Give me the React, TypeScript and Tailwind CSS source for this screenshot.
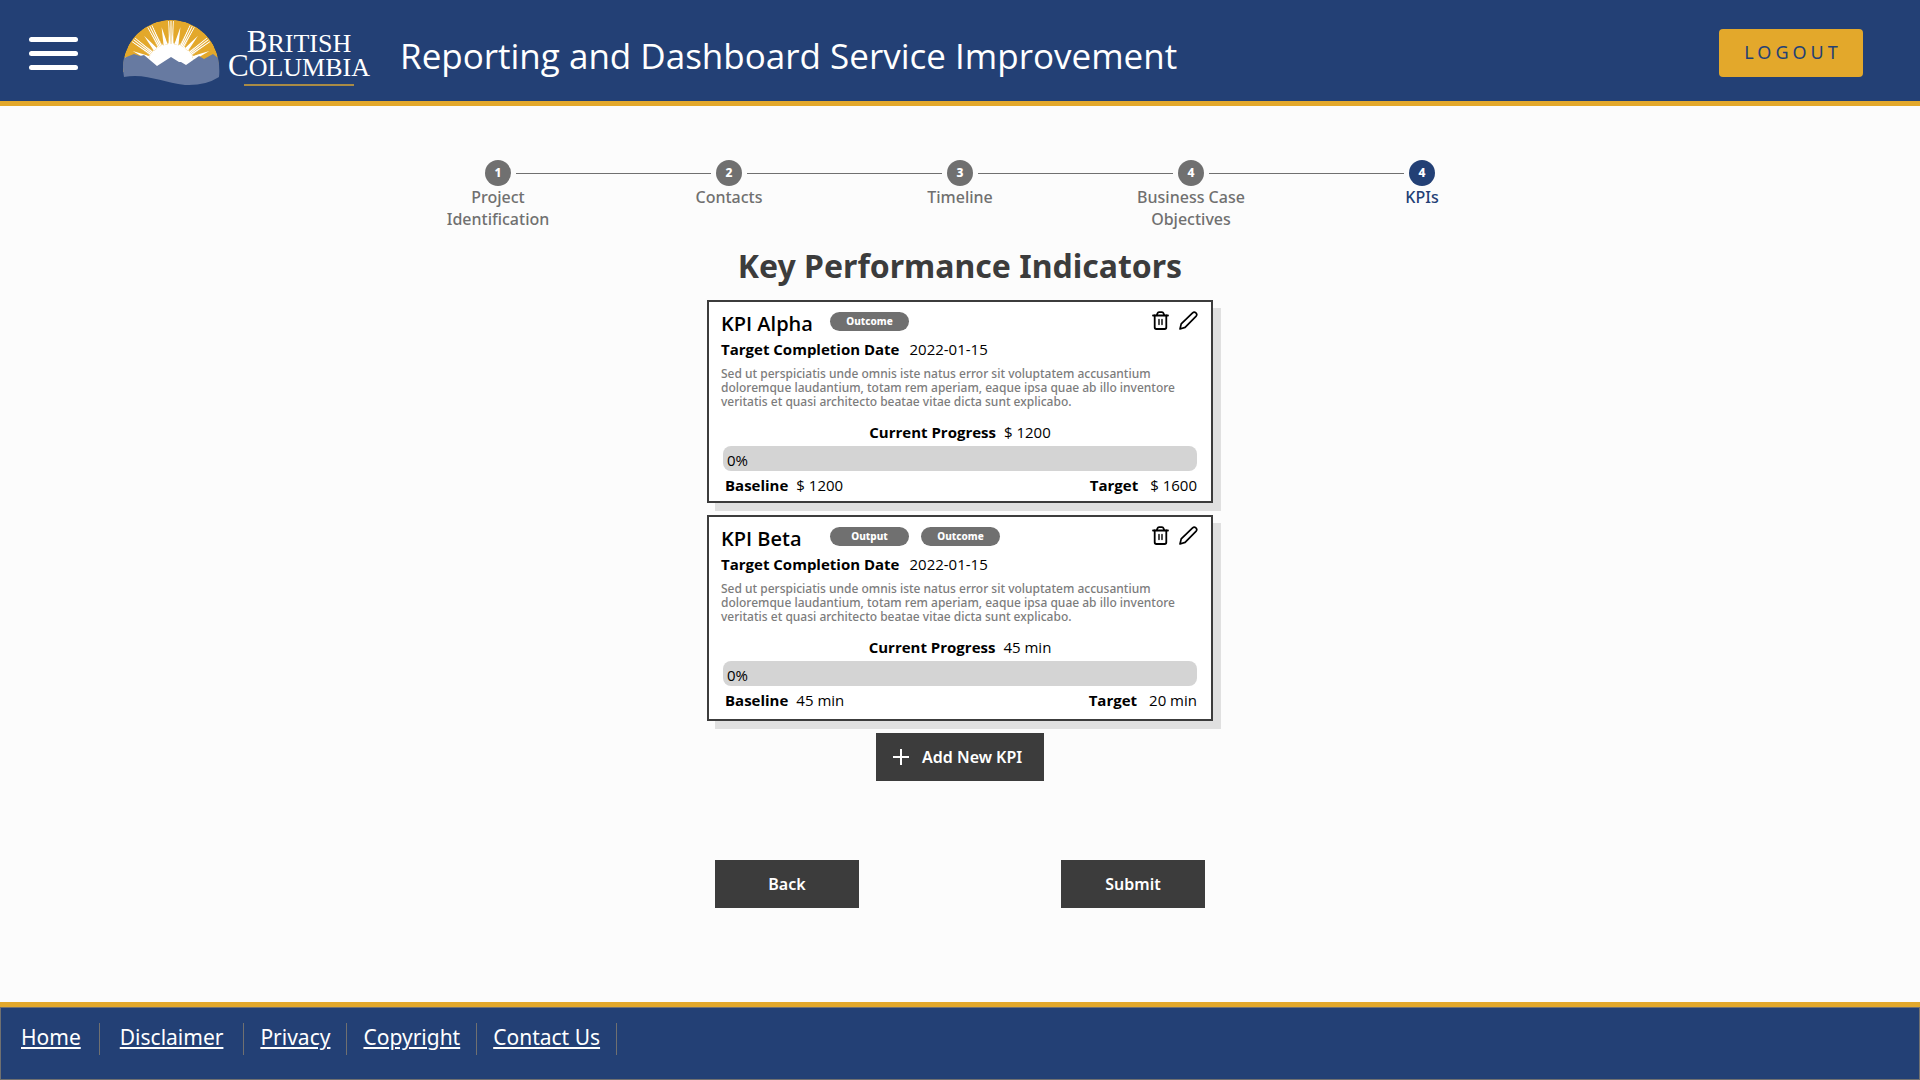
type Kpi = {
  name: string;
  tags: string[];
  date: string;
  description: string;
  current: string;
  progress: number;
  baseline: string;
  target: string;
};

const description =
  "Sed ut perspiciatis unde omnis iste natus error sit voluptatem accusantium doloremque laudantium, totam rem aperiam, eaque ipsa quae ab illo inventore veritatis et quasi architecto beatae vitae dicta sunt explicabo.";

const kpis: Kpi[] = [
  {
    name: "KPI Alpha",
    tags: ["Outcome"],
    date: "2022-01-15",
    description,
    current: "$ 1200",
    progress: 0,
    baseline: "$ 1200",
    target: "$ 1600",
  },
  {
    name: "KPI Beta",
    tags: ["Output", "Outcome"],
    date: "2022-01-15",
    description,
    current: "45 min",
    progress: 0,
    baseline: "45 min",
    target: "20 min",
  },
];

const steps = [
  { number: "1", label: "Project Identification" },
  { number: "2", label: "Contacts" },
  { number: "3", label: "Timeline" },
  { number: "4", label: "Business Case Objectives" },
  { number: "4", label: "KPIs" },
];

const links = ["Home", "Disclaimer", "Privacy", "Copyright", "Contact Us"];

/* Point on a circle around the sun's centre; the angle is in degrees, 0 pointing up. */
function polar(angle: number, radius: number) {
  const a = (angle * Math.PI) / 180;
  return `${(48 + radius * Math.sin(a)).toFixed(2)} ${(48 - radius * Math.cos(a)).toFixed(2)}`;
}

function SunLogo() {
  const groups = [-80, -53, -27, 0, 27, 53, 80];
  const gaps = [-66, -40, -13, 13, 40, 66];
  return (
    <svg width="97" height="66" viewBox="0 0 97 66" aria-hidden="true">
      <clipPath id="sun-dome">
        <path d="M0 52V48A48 48 0 0 1 96 48V52Z" />
      </clipPath>
      <g clipPath="url(#sun-dome)">
        <circle cx="48" cy="48" r="48" fill="#e3a82b" />
        <circle cx="48" cy="48" r="24" fill="#fff" />
        {groups.flatMap((g) =>
          [-6, -3, 0, 3, 6].map((d) => (
            <path
              key={`${g}:${d}`}
              d={`M${polar(g + d * 1.1 - 1.8, 22)}L${polar(g + d - 0.6, 47)}L${polar(g + d + 0.6, 47)}L${polar(g + d * 1.1 + 1.8, 22)}Z`}
              fill="#fff"
            />
          )),
        )}
        {gaps.map((g) => (
          <path
            key={g}
            d={`M${polar(g - 5, 24)}L${polar(g, 42)}L${polar(g + 5, 24)}Z`}
            fill="#fff"
          />
        ))}
        {[-73, -60, -46, -34, -20, -7, 7, 20, 34, 46, 60, 73].map((g) => (
          <path
            key={g}
            d={`M${polar(g - 3.6, 48)}L${polar(g - 1.2, 25)}L${polar(g + 1.2, 25)}L${polar(g + 3.6, 48)}Z`}
            fill="#e3a82b"
          />
        ))}
      </g>
      <path
        d="M1 38L11 34L17 36L21 35L34 46L48 37L56 42L58 42L63 45L76 36L81 39L90 34L95 38Q97 48 96 57Q82 66 62 65C40 63 24 53 1 57Q-1 46 1 38Z"
        fill="#677aa1"
      />
    </svg>
  );
}

function Logo() {
  return (
    <a href="#" aria-label="British Columbia" className="flex items-start text-white no-underline">
      <SunLogo />
      <span className="mt-[11px] ml-2 flex flex-col items-center font-['Liberation_Serif',serif] text-[26px] leading-[22px]">
        <span>
          <span className="text-[31px] leading-[22px]">B</span>RITISH
        </span>
        <span>
          <span className="text-[31px] leading-[22px]">C</span>OLUMBIA
        </span>
        <span className="mt-[5px] h-0.5 w-[110px] bg-[#a98b45]" />
      </span>
    </a>
  );
}

function TrashIcon() {
  return (
    <svg width="17" height="19" viewBox="0 0 17 19" fill="none" stroke="#000" strokeWidth="1.8" strokeLinecap="round" strokeLinejoin="round" aria-hidden="true">
      <path d="M1 4.500h15" />
      <path d="M2.700 4.500V16.300q0 1.700 1.700 1.700h8.200q1.700 0 1.700-1.700V4.500" />
      <path d="M4.800 4.200L5.500 2.200Q5.900 1.100 7 1.100H10Q11.100 1.100 11.500 2.200L12.200 4.200" />
      <path d="M7 8.500v5M10 8.500v5" strokeWidth="1.400" />
    </svg>
  );
}

function PencilIcon() {
  return (
    <svg width="19" height="19" viewBox="0 0 19 19" fill="none" stroke="#000" strokeWidth="1.700" strokeLinecap="round" strokeLinejoin="round" aria-hidden="true">
      <path d="M1 18L2.200 12.900L13.600 1.800Q15.200 0.400 16.900 1.800Q18.500 3.400 17.200 5.100L6.100 16.400Z" />
    </svg>
  );
}

function KpiCard({ kpi }: { kpi: Kpi }) {
  return (
    <article className="border-2 border-[#3c3c3c] bg-white px-3 pt-2 pb-1 font-['Open_Sans',sans-serif] text-black shadow-[8px_8px_0_#e0e0e0] last:pb-[7px]">
      <header className="flex items-start">
        <h2 className="w-[109px] text-xl leading-[27px] font-semibold">{kpi.name}</h2>
        <ul className="flex gap-3 pt-0.5">
          {kpi.tags.map((tag) => (
            <li key={tag} className="w-[79px] rounded-full bg-[#707070] text-center font-['Noto_Sans',sans-serif] text-[10px] leading-[19px] font-extrabold text-white">
              {tag}
            </li>
          ))}
        </ul>
        <div className="mr-px ml-auto flex gap-2.5 pt-px">
          <button type="button" aria-label={`Delete ${kpi.name}`}>
            <TrashIcon />
          </button>
          <button type="button" aria-label={`Edit ${kpi.name}`}>
            <PencilIcon />
          </button>
        </div>
      </header>
      <p className="flex gap-2.5 text-[15px] leading-6">
        <span className="font-bold">Target Completion Date</span>
        <span>{kpi.date}</span>
      </p>
      <p className="mt-1.5 font-['Noto_Sans',sans-serif] text-xs leading-[14px] font-medium text-[#7c7c7c]">{kpi.description}</p>
      <p className="mt-[11px] flex justify-center gap-2 text-[15px] leading-6">
        <span className="font-bold">Current Progress</span>
        <span>{kpi.current}</span>
      </p>
      <div className="mx-0.5">
        <div
          role="progressbar"
          aria-label={`${kpi.name} progress`}
          aria-valuenow={kpi.progress}
          className="mt-0.5 rounded-lg bg-[#d4d4d4] px-1 pt-1 text-[15px] leading-[21px]"
        >
          {kpi.progress}%
        </div>
        <div className="mt-0.5 flex justify-between pl-0.5 text-[15px] leading-6">
          <p className="flex gap-2">
            <span className="font-bold">Baseline</span>
            <span>{kpi.baseline}</span>
          </p>
          <p className="flex gap-3">
            <span className="font-bold">Target</span>
            <span>{kpi.target}</span>
          </p>
        </div>
      </div>
    </article>
  );
}

function Stepper() {
  return (
    <ol className="mt-[54px] flex w-full max-w-[1155px]">
      {steps.map((step, i) => {
        const active = i === steps.length - 1;
        return (
          <li key={step.label} className="flex-1" aria-current={active ? "step" : undefined}>
            <div className="flex items-center gap-[5px]">
              <span className={i === 0 ? "flex-1" : "h-px flex-1 bg-[#707070]"} />
              <span
                className={
                  active
                    ? "size-[26px] rounded-full bg-[#234075] text-center text-xs leading-[26px] font-extrabold text-white"
                    : "size-[26px] rounded-full bg-[#707070] text-center text-xs leading-[26px] font-extrabold text-white"
                }
              >
                {step.number}
              </span>
              <span className={active ? "flex-1" : "h-px flex-1 bg-[#707070]"} />
            </div>
            <p
              className={
                active
                  ? "mx-auto w-28 text-center text-base leading-[22px] font-medium text-[#234075]"
                  : "mx-auto w-28 text-center text-base leading-[22px] font-medium text-[#707070]"
              }
            >
              {step.label}
            </p>
          </li>
        );
      })}
    </ol>
  );
}

export default function App() {
  return (
    <div className="flex min-h-screen flex-col bg-[#fcfcfc] font-['Noto_Sans',sans-serif]">
      <header className="flex h-[106px] items-center border-b-[5px] border-[#e3a82b] bg-[#234075] pt-[5px] pr-[57px] pl-[29px]">
        <button type="button" aria-label="Open menu" className="mr-[45px] flex flex-col gap-[9px]">
          <span className="h-[5px] w-[49px] rounded-full bg-white" />
          <span className="h-[5px] w-[49px] rounded-full bg-white" />
          <span className="h-[5px] w-[49px] rounded-full bg-white" />
        </button>
        <Logo />
        <p className="ml-[30px] pt-1.5 font-['Open_Sans',sans-serif] text-[35px] text-white">
          Reporting and Dashboard Service Improvement
        </p>
        <button
          type="button"
          className="ml-auto h-12 w-36 rounded bg-[#e3a82b] pb-0.5 pl-1 text-lg tracking-[4px] text-[#234075]"
        >
          LOGOUT
        </button>
      </header>

      <main className="flex flex-1 flex-col items-center px-6">
        <Stepper />
        <h1 className="mt-3.5 text-[32px] leading-[44px] font-bold text-[#3c3c3c]">Key Performance Indicators</h1>
        <section className="mt-3 flex w-full max-w-[506px] flex-col gap-3">
          {kpis.map((kpi) => (
            <KpiCard key={kpi.name} kpi={kpi} />
          ))}
        </section>
        <button
          type="button"
          className="mt-3 flex h-12 w-[168px] items-center gap-[13px] bg-[#3c3c3c] pl-[17px] text-base font-semibold text-white"
        >
          <svg width="16" height="16" viewBox="0 0 16 16" stroke="#fff" strokeWidth="2" aria-hidden="true">
            <path d="M8 0v16M0 8h16" />
          </svg>
          Add New KPI
        </button>
        <div className="mt-[79px] mb-12 flex w-full max-w-[490px] justify-between">
          <button type="button" className="h-12 w-36 bg-[#3c3c3c] text-base font-semibold text-white">
            Back
          </button>
          <button type="button" className="h-12 w-36 bg-[#3c3c3c] text-base font-semibold text-white">
            Submit
          </button>
        </div>
      </main>

      <footer className="border-t-[5px] border-[#e3a82b]">
        <nav aria-label="Footer" className="h-[73px] border border-[#707070] bg-[#234075] pt-[15px]">
          <ul className="flex">
            {links.map((link) => (
              <li
                key={link}
                className="h-8 border-r border-[#707070] px-4 text-[21px] leading-7 text-white first:pr-[18px] first:pl-5 nth-2:px-5"
              >
                <a href="#" className="underline">
                  {link}
                </a>
              </li>
            ))}
          </ul>
        </nav>
      </footer>
    </div>
  );
}
